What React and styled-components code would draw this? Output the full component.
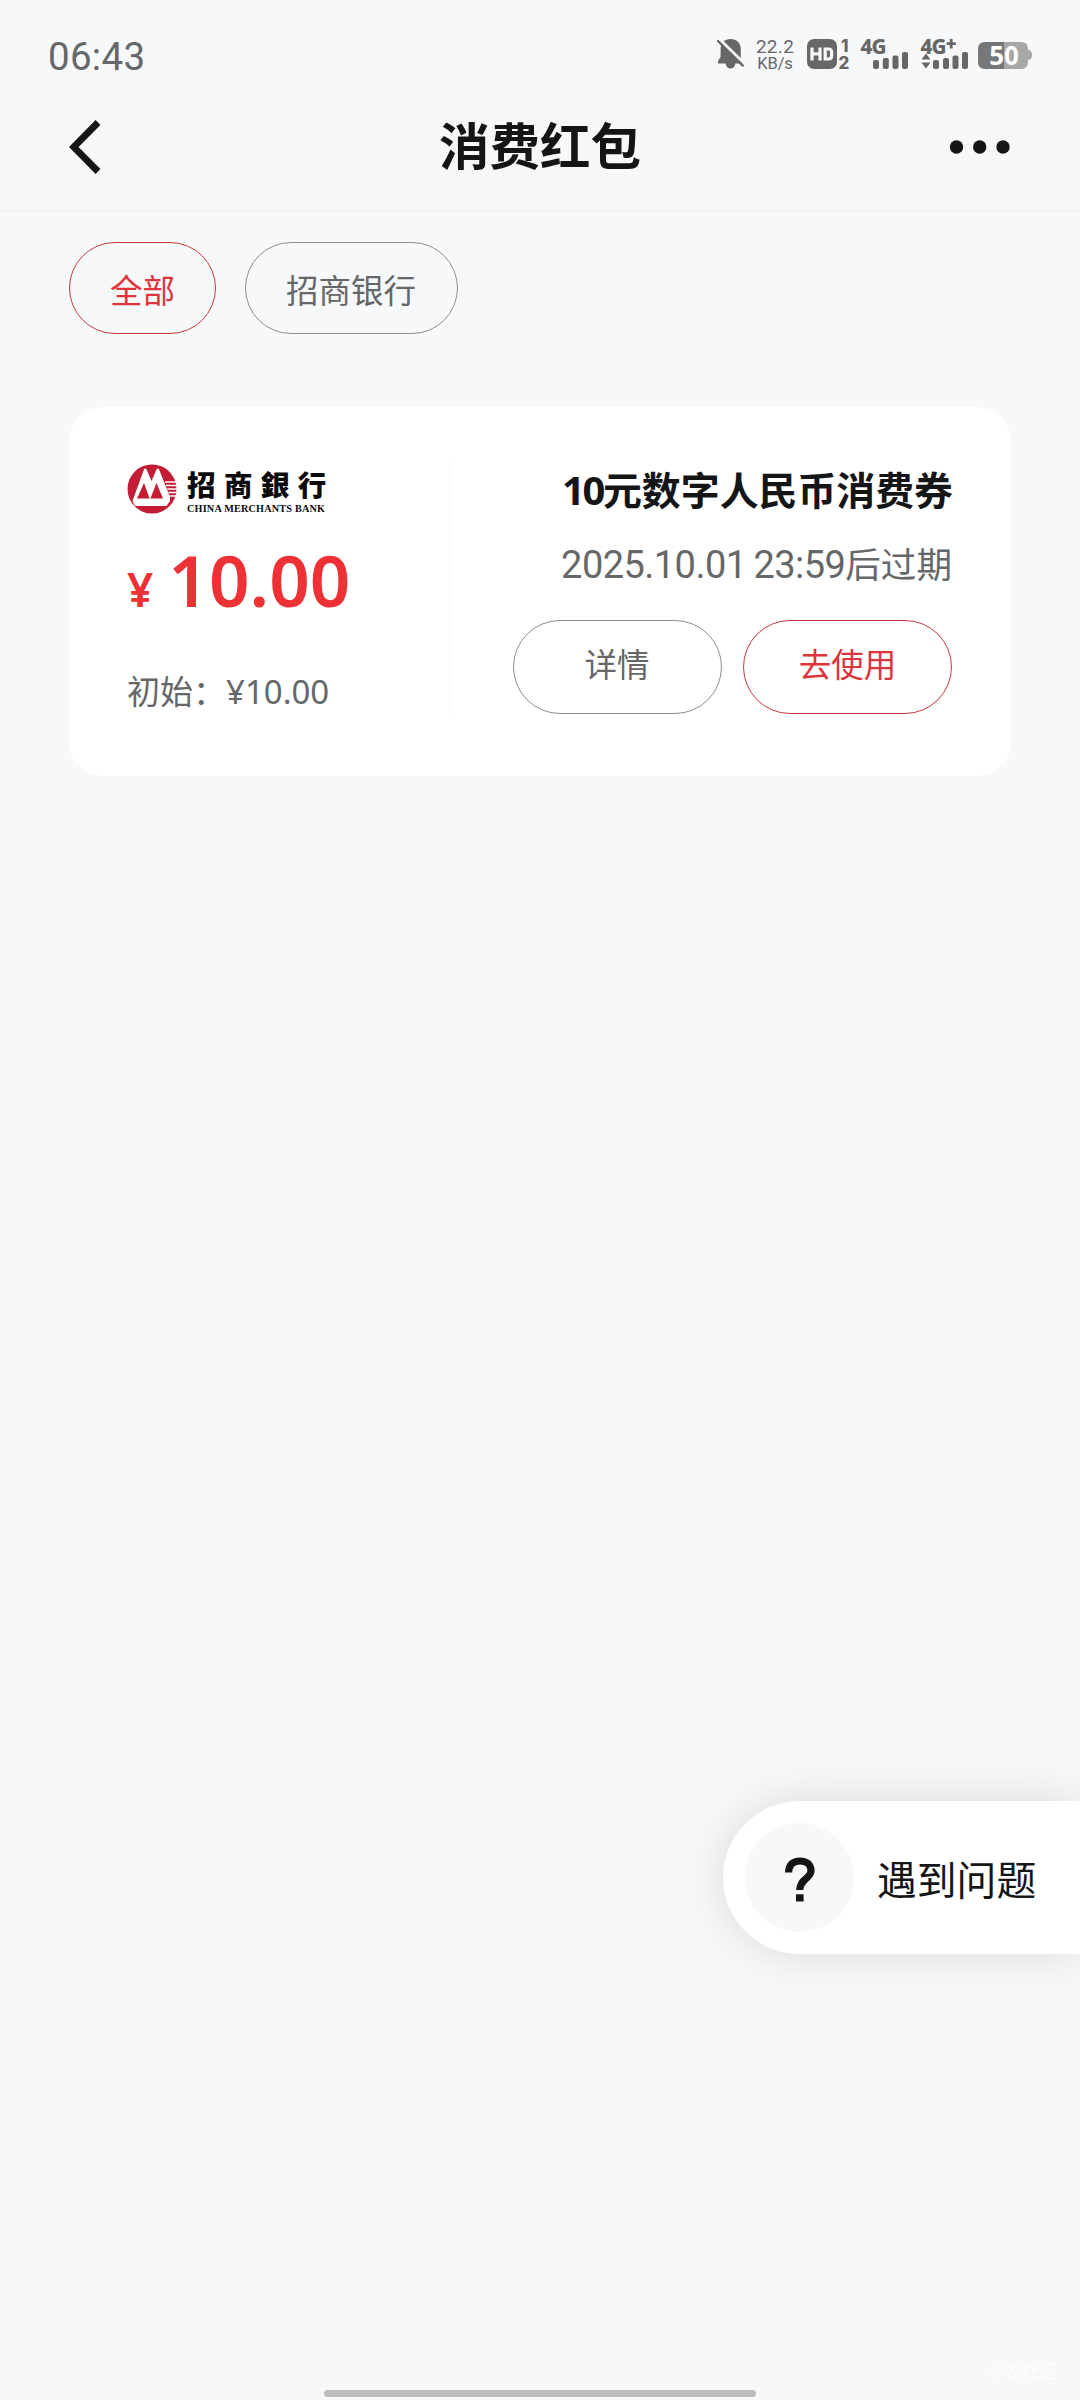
import React from "react";
import styled, { createGlobalStyle } from "styled-components";

const GlobalStyle = createGlobalStyle`
  * { box-sizing: border-box; }
  body { margin: 0; background: #f6f8fa; }
  button { font: inherit; background: none; border: 0; padding: 0; }
`;

const cjk = `"Noto Sans CJK SC", sans-serif`;

const Screen = styled.div`
  display: flex;
  flex-direction: column;
  width: 1080px;
  height: 2400px;
  overflow: hidden;
  background: #f6f8fa;
  color: #141516;
  font-family: Roboto, ${cjk};
`;

const StatusBar = styled.header`
  display: flex;
  align-items: flex-start;
  justify-content: space-between;
  height: 88px;
  padding: 36px 48px 0 48px;
  color: #666768;
`;

const Clock = styled.time`
  padding-top: 1px;
  font-size: 38.5px;
  line-height: 40px;
  letter-spacing: 0.3px;
`;

const StatusIcons = styled.div`
  display: flex;
  padding-top: 2px;
  svg { display: block; overflow: visible; }
`;

const StatusSlot = styled.div`
  width: ${(p) => p.$w}px;
  margin-left: ${(p) => p.$gap}px;
`;

const Speed = styled.div`
  display: flex;
  flex-direction: column;
  align-items: center;
  margin-left: -1px;
  white-space: nowrap;
`;

const SpeedLine = styled.span`
  font-size: ${(p) => p.$size}px;
  line-height: 17px;
  letter-spacing: ${(p) => p.$track}px;
`;

const NavBar = styled.nav`
  display: grid;
  grid-template-columns: 1fr auto 1fr;
  align-items: center;
  height: 124px;
  padding: 0 69px 4px;
  border-bottom: 2px solid #eff1f2;
`;

const NavButton = styled.button`
  justify-self: ${(p) => p.$side};
  svg { display: block; }
`;

const Title = styled.h1`
  margin: 0;
  padding-bottom: 8px;
  font: 700 50.5px/60px ${cjk};
  color: #141516;
`;

const Filters = styled.div`
  display: flex;
  gap: 29px;
  padding: 30px 69px 0;
`;

const Pill = styled.button`
  display: flex;
  align-items: center;
  justify-content: center;
  width: ${(p) => p.$w}px;
  height: ${(p) => p.$h}px;
  padding-right: ${(p) => (p.$active ? 0 : 1)}px;
  padding-top: ${(p) => p.$drop || 0}px;
  padding-bottom: ${(p) => p.$lift || 0}px;
  border: 1px solid ${(p) => (p.$active ? "#c9393e" : "#8d8e90")};
  border-radius: 999px;
  color: ${(p) => (p.$active ? "#df3439" : "#666768")};
  font: 400 32.5px/40px ${cjk};
`;

const Card = styled.section`
  display: flex;
  height: 369px;
  margin: 73px 69px 0;
  padding: 52px 58px 60px 58px;
  border-radius: 34px;
  background: #fff;
`;

const Left = styled.div`
  display: flex;
  flex-direction: column;
  width: 323px;
  border-right: 1px solid #f7f8f8;
`;

const Bank = styled.div`
  display: flex;
  gap: 10px;
  height: 62px;
  padding-top: 5px;
  svg { display: block; }
`;

const BankWords = styled.div`
  display: flex;
  flex-direction: column;
  padding-top: 2px;
  color: #0c0a0b;
  white-space: nowrap;
`;

const BankName = styled.div`
  height: 37px;
  font: 900 28.5px/36px "Noto Sans CJK TC", sans-serif;
  letter-spacing: 8.4px;
`;

const BankLatin = styled.div`
  font: 700 10.2px/12px "Liberation Serif", serif;
  letter-spacing: 0.2px;
`;

const Price = styled.div`
  display: flex;
  align-items: baseline;
  gap: 15px;
  height: 96px;
  margin-top: 15px;
  color: #ee3135;
  font-family: "Noto Sans", sans-serif;
  font-weight: 600;
  line-height: 96px;
`;

const Yen = styled.span`
  font-size: 46px;
`;

const Amount = styled.span`
  font-size: 71px;
`;

const Initial = styled.div`
  display: flex;
  margin-top: 40px;
  color: #666768;
  font: 400 33px/48px "Noto Sans", ${cjk};
  white-space: nowrap;
`;

const Right = styled.div`
  display: flex;
  flex: 1;
  flex-direction: column;
  align-items: flex-end;
`;

const CouponName = styled.h2`
  margin: 5px 0 0;
  font: 700 38.9px/48px ${cjk};
  white-space: nowrap;
`;

const Narrow = styled.span`
  font-family: "Noto Sans", sans-serif;
  font-size: 40px;
  letter-spacing: -2.4px;
`;

const Expiry = styled.p`
  margin: 25px 0 0;
  padding-right: 1px;
  color: #666768;
  font: 400 35.6px/48px ${cjk};
  white-space: nowrap;
`;

const Digits = styled.span`
  font-family: Roboto, sans-serif;
  font-size: 38px;
  letter-spacing: -0.55px;
  word-spacing: -2px;
`;

const Actions = styled.div`
  display: flex;
  gap: 21px;
  margin-top: 31px;
  padding-right: 1px;
`;

const Help = styled.aside`
  display: flex;
  align-items: center;
  align-self: flex-end;
  gap: 23px;
  width: 357px;
  height: 153px;
  margin-top: 1025px;
  padding: 0 0 0 22px;
  border-radius: 77px 0 0 77px;
  background: #fff;
  box-shadow: 0 0 46px rgba(0, 0, 0, 0.12);
`;

const HelpMark = styled.div`
  display: flex;
  align-items: center;
  justify-content: center;
  width: 109px;
  height: 109px;
  padding-top: 3px;
  border-radius: 50%;
  background: #f6f8fa;
`;

const HelpText = styled.span`
  font: 400 39.8px/48px ${cjk};
`;

const Bottom = styled.footer`
  display: flex;
  flex-direction: column;
  align-items: center;
  margin-top: auto;
  padding-bottom: 3px;
`;

const Watermark = styled.span`
  align-self: flex-end;
  margin: 0 22px 8px 0;
  color: #fdfefe;
  font: 400 18px/24px ${cjk};
`;

const HomeBar = styled.div`
  width: 432px;
  height: 7px;
  border-radius: 4px;
  background: #bbbdbe;
`;

const grey = "#666768";

const Bell = () => (
  <svg width="27" height="31" viewBox="0 0 27 31" fill={grey}>
    <path d="M13.5 1C7.5 1 3.6 5 3.6 11V19L1 23V25.5H8.6C9 28.6 10.8 30.5 13.5 30.5S18 28.6 18.4 25.5H25V23L23.8 19V11C23.8 5 19.5 1 13.5 1Z" />
    <path d="M2 0.8L28 26" stroke="#f6f8fa" strokeWidth="3" />
    <path d="M1 3L25.8 27.6" stroke={grey} strokeWidth="2.3" strokeLinecap="round" />
  </svg>
);

const Hd = () => (
  <svg width="43" height="31" viewBox="0 0 43 31" fill={grey}>
    <rect y="1" width="30" height="30" rx="7" />
    <path d="M5 9.5V22.5M13 9.5V22.5M5 15.9H13M18.2 11H21.6Q24.6 11 24.6 14V18Q24.6 21 21.6 21H18.2Z" fill="none" stroke="#f6f8fa" strokeWidth="3.2" />
    <g fontFamily="Inter, sans-serif" fontWeight="800" fontSize="17">
      <text x="34" y="14">1</text>
      <text x="31.5" y="31">2</text>
    </g>
  </svg>
);

const Signal = ({ plus }) => {
  const bars = plus ? [12, 22, 31.5, 41] : [12, 21.8, 31.5, 41];
  return (
    <svg width="48" height="31" viewBox="0 0 48 31" fill={grey}>
      <text x="-0.5" y="15.8" fontFamily="Noto Sans, sans-serif" fontWeight="800" fontSize="20.5" letterSpacing="-0.8">
        4G
      </text>
      {plus && <path d="M30.2 1V10.4M25.6 5.7H34.8" stroke={grey} strokeWidth="2.8" />}
      {plus && <path d="M0.5 21.5L5 15.5L9.5 21.5ZM0.5 24.5L5 30.5L9.5 24.5Z" stroke="#f6f8fa" strokeWidth="1" paintOrder="stroke" />}
      {bars.map((x, i) => {
        const top = [22, 20, 17.5, 14][i];
        return <rect key={x} x={x} y={top} width="6" height={31 - top} rx="2" />;
      })}
    </svg>
  );
};

const Battery = () => (
  <svg width="54" height="31" viewBox="0 0 54 31">
    <path d="M26 4H43Q50 4 50 11V12Q54 12 54 17T50 22V24Q50 31 43 31H26Z" fill="#a6a7a8" />
    <path d="M26 4H7Q0 4 0 11V24Q0 31 7 31H26Z" fill="#767778" />
    <text x="26" y="26.8" textAnchor="middle" fill="#fff" fontFamily="Noto Sans, sans-serif" fontWeight="700" fontSize="26">50</text>
  </svg>
);

const MerchantsMark = () => (
  <svg width="50" height="50" viewBox="0 0 50 50">
    <circle cx="25" cy="25" r="24.5" fill="#c51c36" />
    <path d="M5.5 37L17.2 4.8H19.2L24.5 17L29.8 4.8H31.8L43 33V37L39.5 42H8Z" fill="#fff" />
    <path d="M10 34.5L17 19L22.6 34.5ZM23.4 34.5L29.5 19L36 34.5Z" fill="#c51c36" />
    <path d="M38 18H49M39 21.5H50M40.3 25H50M41.5 28.5H50M42.5 32H49" stroke="#fff" strokeWidth="1.3" />
  </svg>
);

export default function App() {
  return (
    <Screen>
      <GlobalStyle />
      <StatusBar>
        <Clock>06:43</Clock>
        <StatusIcons>
          <StatusSlot $w={27} $gap={0}><Bell /></StatusSlot>
          <StatusSlot $w={37} $gap={13}>
            <Speed>
              <SpeedLine $size={19} $track={0.3}>22.2</SpeedLine>
              <SpeedLine $size={16.5} $track={-0.1}>KB/s</SpeedLine>
            </Speed>
          </StatusSlot>
          <StatusSlot $w={43} $gap={13}><Hd /></StatusSlot>
          <StatusSlot $w={48} $gap={11}><Signal /></StatusSlot>
          <StatusSlot $w={48} $gap={12}><Signal plus /></StatusSlot>
          <StatusSlot $w={54} $gap={9}><Battery /></StatusSlot>
        </StatusIcons>
      </StatusBar>

      <NavBar>
        <NavButton $side="start" aria-label="返回">
          <svg width="33" height="54" viewBox="0 0 33 54">
            <path d="M29 2.5L4.7 27L29 51.5" fill="none" stroke="#141516" strokeWidth="6.8" />
          </svg>
        </NavButton>
        <Title>消费红包</Title>
        <NavButton $side="end" aria-label="更多">
          <svg width="62" height="14" viewBox="0 0 62 14" fill="#141516">
            <circle cx="7.5" cy="7" r="6.7" />
            <circle cx="30.7" cy="7" r="6.7" />
            <circle cx="54" cy="7" r="6.7" />
          </svg>
        </NavButton>
      </NavBar>

      <Filters>
        <Pill $w={147} $h={92} $drop={1} $active>全部</Pill>
        <Pill $w={213} $h={92} $drop={1}>招商银行</Pill>
      </Filters>

      <Card>
        <Left>
          <Bank>
            <MerchantsMark />
            <BankWords>
              <BankName>招商銀行</BankName>
              <BankLatin>CHINA MERCHANTS BANK</BankLatin>
            </BankWords>
          </Bank>
          <Price><Yen>¥</Yen><Amount>10.00</Amount></Price>
          <Initial><span>初始：</span><span>¥10.00</span></Initial>
        </Left>
        <Right>
          <CouponName><Narrow>10</Narrow>元数字人民币消费券</CouponName>
          <Expiry><Digits>2025.10.01 23:59</Digits>后过期</Expiry>
          <Actions>
            <Pill $w={209} $h={94} $lift={8}>详情</Pill>
            <Pill $w={209} $h={94} $lift={8} $active>去使用</Pill>
          </Actions>
        </Right>
      </Card>

      <Help>
        <HelpMark>
          <svg width="30" height="45" viewBox="0 0 30 45">
            <path d="M3.6 15.5C3.6 8 8 4 15 4S26 8 26 13.8C26 21.5 14.8 22 14.8 33" fill="none" stroke="#141516" strokeWidth="7.2" />
            <rect x="11" y="37.3" width="7.6" height="7.2" fill="#141516" />
          </svg>
        </HelpMark>
        <HelpText>遇到问题</HelpText>
      </Help>

      <Bottom>
        <Watermark>卡农社区</Watermark>
        <HomeBar />
      </Bottom>
    </Screen>
  );
}
